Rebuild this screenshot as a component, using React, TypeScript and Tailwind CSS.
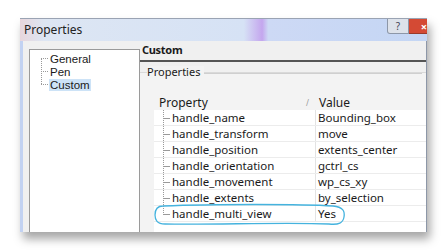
import React from 'react';

const rows = [
  ['handle_name', 'Bounding_box'],
  ['handle_transform', 'move'],
  ['handle_position', 'extents_center'],
  ['handle_orientation', 'gctrl_cs'],
  ['handle_movement', 'wp_cs_xy'],
  ['handle_extents', 'by_selection'],
  ['handle_multi_view', 'Yes'],
];

const treeItems = ['General', 'Pen', 'Custom'];

const App = () => (
  <div className="w-[446px] h-[250px] bg-white overflow-hidden pl-[20px] pt-[18px] font-['Noto_Sans',sans-serif] text-[11px] text-[#1a1a1a]">
    <div className="relative w-[407px] h-[214px] flex flex-col border-t border-[#9aa3b3] shadow-[3px_7px_9px_rgba(0,0,0,0.35)]">
      {/* title bar */}
      <div className="h-[22px] shrink-0 flex pl-[4px] bg-[linear-gradient(90deg,#e8d6dc_0%,#dde6f3_6%,#d6e2f5_55%,#c4a6ee_59.5%,#cdd9f5_61%,#c4d6f4_100%)]">
        <span className="self-center text-[12px] leading-none text-[#222]">Properties</span>
        <div className="ml-auto flex items-start">
          <div className="w-[22px] h-[15px] rounded-bl-[3px] border border-t-0 border-[#8d97a8] bg-[#dde2ea] flex items-center justify-center text-[10px] leading-none text-[#445]">?</div>
          <div className="w-[18px] h-[15px] border-b border-[#9a3a2a] bg-[#d44a34] flex items-center justify-end text-[11px] leading-none font-bold text-white">×</div>
        </div>
      </div>

      {/* body */}
      <div className="flex-1 flex border-l-[3px] border-[#c2d2f2] border-r border-r-[#8d97a8] bg-[#f0f0f0] overflow-hidden">
        <div className="w-[6px] shrink-0" />
        {/* left tree */}
        <div className="mt-[8px] w-[111px] shrink-0 bg-white border-l border-t border-r border-[#9a9a9a] pt-[2px] font-['Liberation_Sans',sans-serif] text-[11.5px]">
          <div className="relative pl-[20px]">
            <div className="absolute left-[11px] top-[6px] h-[26px] border-l border-dotted border-[#999]" />
            {treeItems.map((t) => (
              <div key={t} className="relative h-[13px] flex items-center">
                <div className="absolute left-[-9px] top-[6px] w-[7px] border-t border-dotted border-[#999]" />
                <span className={t === 'Custom' ? 'bg-[#cde3f7] px-[1px] -ml-[1px] leading-[12px]' : 'leading-[12px]'}>{t}</span>
              </div>
            ))}
          </div>
        </div>

        {/* right pane */}
        <div className="flex-1 flex flex-col">
          <div className="h-[21px] flex items-center pl-[2px] border-b-2 border-[#555] font-bold tracking-[-0.3px]">Custom</div>
          <div className="h-[11px] border-b border-[#d9d9d9]" />
          <div className="flex-1 flex flex-col bg-[#f3f3f3]">
            <div className="relative h-[1px]">
              <span className="absolute left-[7px] -top-[7px] leading-[12px] bg-[#f3f3f3] pr-[4px]">Properties</span>
              <div className="absolute left-[64px] right-[4px] top-0 border-t border-[#cfcfcf]" />
            </div>
            <div className="ml-[14px] mt-[22px] flex-1 flex flex-col">
              <div className="h-[14px] flex items-center text-[12px]">
                <span className="w-[152px] pl-[5px]">Property</span>
                <span className="w-[10px] text-[8px] text-[#999]">/</span>
                <span className="pl-[3px]">Value</span>
              </div>
              <div className="relative flex-1 bg-white">
                <div className="absolute left-[9px] top-0 h-[105px] border-l border-dotted border-[#9a9a9a]" />
                {rows.map(([k, v]) => (
                  <div key={k} className="h-[16px] flex border-b border-[#ececec] text-[11.5px]">
                    <div className="relative w-[162px] pl-[18px] flex items-center border-r border-[#e3e3e3]">
                      <div className="absolute left-[10px] top-[8px] w-[6px] border-t border-[#9a9a9a]" />
                      {k}
                    </div>
                    <div className="pl-[2px] flex items-center">{v}</div>
                  </div>
                ))}
              </div>
            </div>
          </div>
        </div>
      </div>

      {/* highlight ring */}
      <svg className="absolute left-[133px] top-[184px]" width="194" height="24" viewBox="0 0 194 24">
        <path d="M10 3 C60 1 150 1 180 3 C190 4 192 8 191 14 C190 20 186 22 176 21 C130 19 60 22 12 21 C4 21 2 17 2 12 C2 6 5 3 10 3 Z" fill="none" stroke="#45b3de" strokeWidth="1.3" />
      </svg>
    </div>
  </div>
);

export default App;
